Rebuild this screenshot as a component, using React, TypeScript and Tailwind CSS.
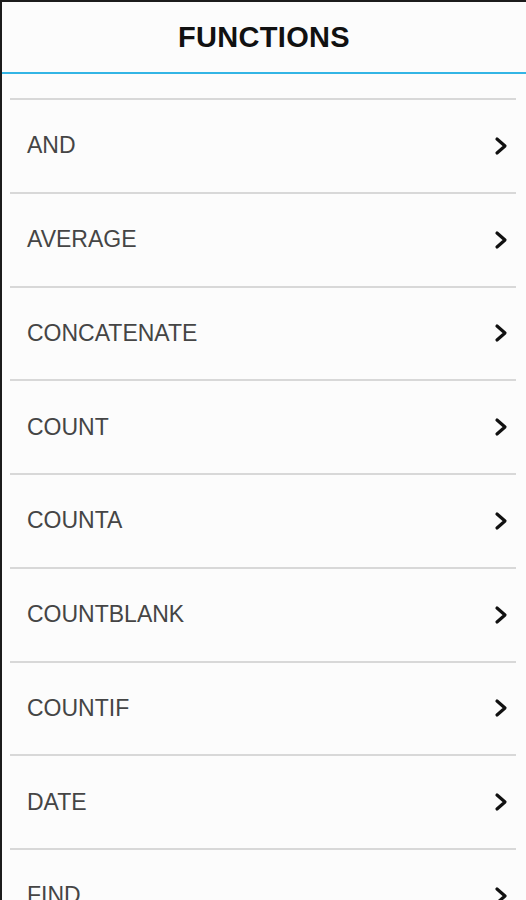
import React from "react";

const items = [
  "AND",
  "AVERAGE",
  "CONCATENATE",
  "COUNT",
  "COUNTA",
  "COUNTBLANK",
  "COUNTIF",
  "DATE",
  "FIND",
  "IF",
];

function Chevron() {
  return (
    <svg width="14" height="20" viewBox="0 0 14 20" className="shrink-0">
      <path d="M3 3 L11 10 L3 17" fill="none" stroke="#111" strokeWidth="3.2" strokeLinecap="round" strokeLinejoin="round" />
    </svg>
  );
}

export default function App() {
  return (
    <div
      className="w-[526px] h-[900px] overflow-hidden bg-[#fcfcfc] border-l-2 border-t-2 border-[#1c1c1c]"
      style={{ fontFamily: '"Liberation Sans", Arial, sans-serif' }}
    >
      <div className="h-[72px] flex items-center justify-center border-b-2 border-[#33b5e5]">
        <span className="text-[29px] font-bold text-[#111] tracking-[0.3px] leading-none">FUNCTIONS</span>
      </div>
      <div className="pl-[8px] pr-[10px]">
        <div className="h-[24px]" />
        {items.map((it) => (
          <div key={it} className="h-[93.75px] border-t-2 border-[#d8d8d8] flex items-center justify-between pl-[17px] pr-[8px]">
            <span className="text-[23px] text-[#454545] leading-none">{it}</span>
            <Chevron />
          </div>
        ))}
      </div>
    </div>
  );
}
